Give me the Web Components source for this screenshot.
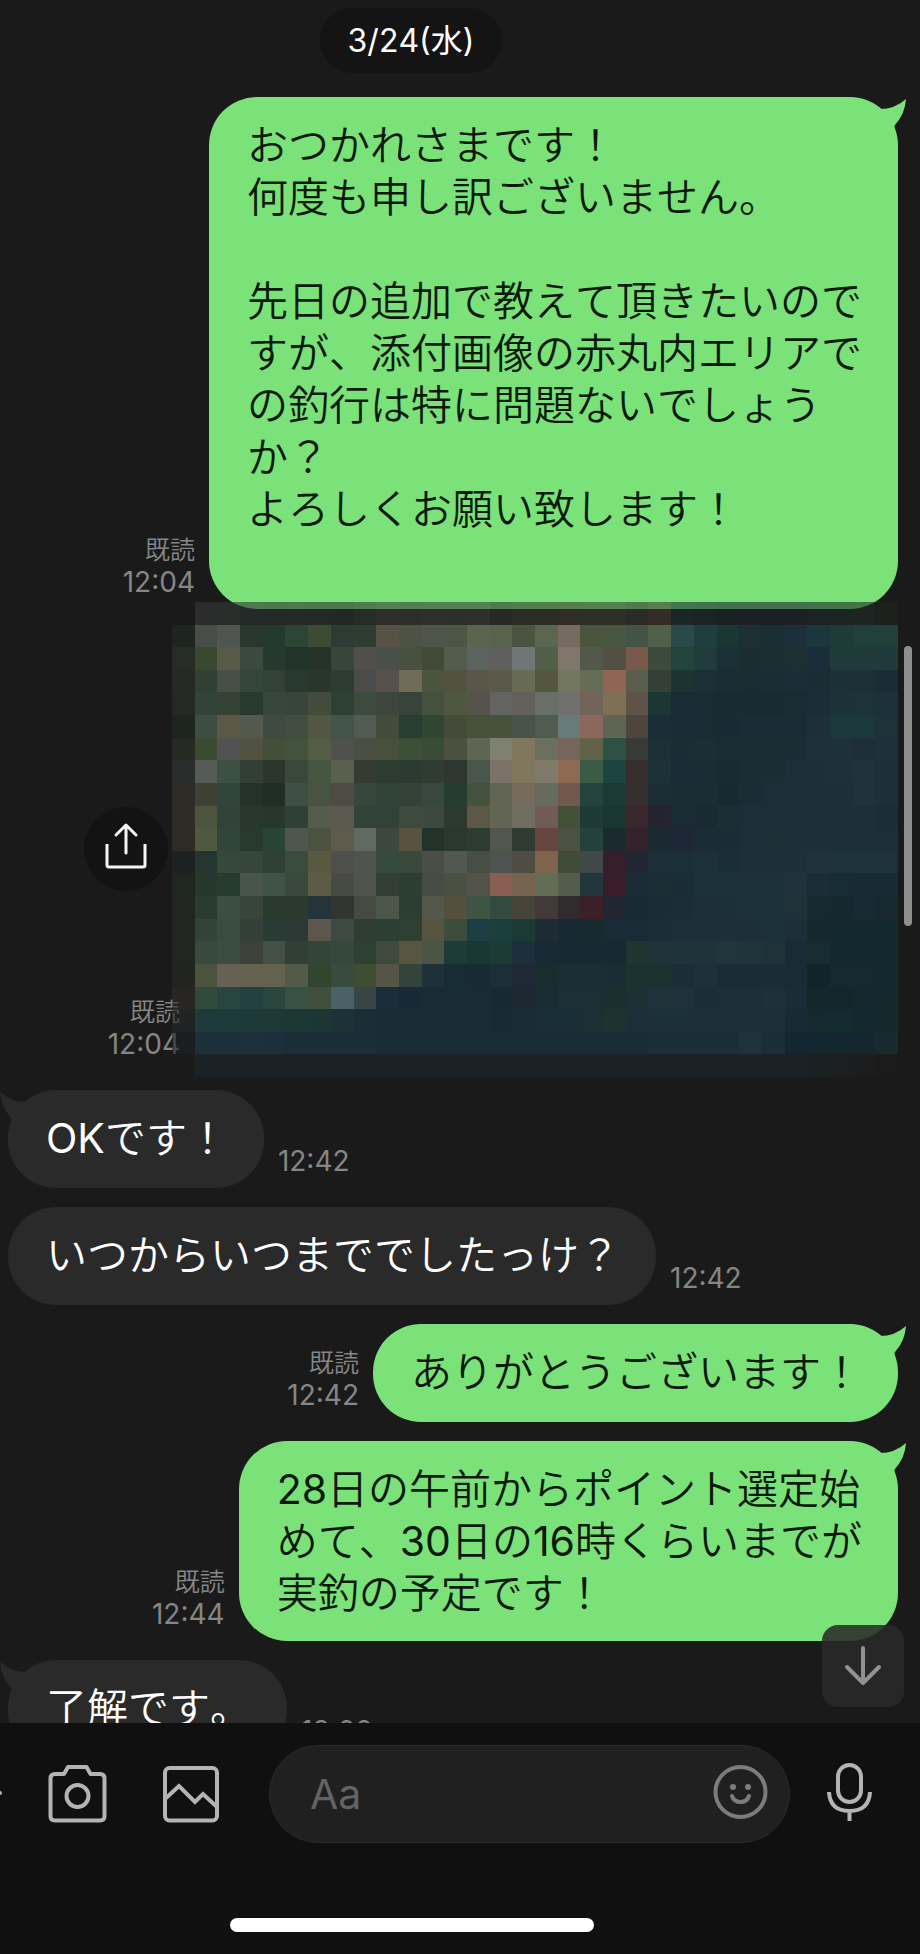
<!DOCTYPE html>
<html lang="ja">
<head>
<meta charset="utf-8">
<meta name="viewport" content="width=device-width, initial-scale=1">
<title>トーク</title>
<style>
    body {
        margin: 0;
        background: #1a1a1a;
        color: #fff;
        font-family: Inter, "Noto Sans CJK JP", sans-serif;
        font-kerning: none;
        text-spacing-trim: space-all;
    }

    /* Latin runs sit heavier than the kana around them */
    chat-message b {
        font-weight: 400;
    }
</style>
</head>
<body>
<chat-app>
    <chat-date>3/24(水)</chat-date>
    <chat-message side="out" tail time="12:04" read>おつかれさまです！<br>何度も申し訳ございません。<br><br>先日の追加で教えて頂きたいのですが、添付画像の赤丸内エリアでの釣行は特に問題ないでしょうか？<br>よろしくお願い致します！<br>&nbsp;</chat-message>
    <chat-photo time="12:04"></chat-photo>
    <chat-message side="in" tail time="12:42"><b>OK</b>です！</chat-message>
    <chat-message side="in" time="12:42">いつからいつまででしたっけ？</chat-message>
    <chat-message side="out" tail time="12:42" read>ありがとうございます！</chat-message>
    <chat-message side="out" tail time="12:44" read><b>28</b>日の午前からポイント選定始<br>めて、<b>30</b>日の<b>16</b>時くらいまでが<br>実釣の予定です！</chat-message>
    <chat-message side="in" tail time="13:02">了解です。</chat-message>
    <chat-composer slot="footer"></chat-composer>
</chat-app>

<script>
// Page frame: message list on top, composer below
class ChatApp extends HTMLElement {
    constructor() {
        super();
        this.attachShadow({ mode: 'open' });
        this.shadowRoot.innerHTML = `
            <style>
                :host {
                    display: flex;
                    flex-direction: column;
                    height: 100vh;
                    overflow: hidden;
                }

                main {
                    position: relative;
                    flex: 1;
                    min-height: 0;
                    overflow: hidden;
                }

                .list {
                    display: flex;
                    flex-direction: column;
                    gap: 19px;
                    padding: 8px 22px 0 8px;
                }

                .scrollbar {
                    position: absolute;
                    top: 646px;
                    right: 8px;
                    width: 8px;
                    height: 280px;
                    border-radius: 4px;
                    background: #8e8e8e;
                }

                .down {
                    position: absolute;
                    right: 16px;
                    bottom: 16px;
                    width: 82px;
                    height: 82px;
                    padding: 0;
                    border: 0;
                    border-radius: 16px;
                    background: rgba(41, 41, 41, .87);
                }

                svg {
                    display: block;
                }
            </style>
            <main>
                <div class="list"><slot></slot></div>
                <div class="scrollbar"></div>
                <button class="down" aria-label="最新のメッセージへ">
                    <svg width="82" height="82" viewBox="0 0 82 82" fill="none" stroke="#929292" stroke-width="4" stroke-linecap="round" stroke-linejoin="round">
                        <path d="M41 23V58M25 42L41 58L57 42"/>
                    </svg>
                </button>
            </main>
            <slot name="footer"></slot>
        `;
    }
}

// Date separator
class ChatDate extends HTMLElement {
    constructor() {
        super();
        this.attachShadow({ mode: 'open' });
        this.shadowRoot.innerHTML = `
            <style>
                :host {
                    display: flex;
                    justify-content: center;
                    padding-right: 84px;
                    margin-bottom: 5px;
                }

                span {
                    padding: 0 28px;
                    border-radius: 33px;
                    background: #141414;
                    font-size: 32px;
                    line-height: 65px;
                }
            </style>
            <span><slot></slot></span>
        `;
    }
}

// Read mark and time, shared by messages and photos
class ChatMeta extends HTMLElement {
    constructor() {
        super();
        this.attachShadow({ mode: 'open' });
    }

    connectedCallback() {
        const read = this.hasAttribute('read') ? '<div>既読</div>' : '';
        this.shadowRoot.innerHTML = `
            <style>
                :host {
                    display: block;
                    flex: none;
                    color: #868686;
                    font-size: 25px;
                    font-weight: 350;
                    line-height: 32px;
                    text-align: right;
                }

                time {
                    display: block;
                    font-size: 28px;
                    font-weight: 400;
                }
            </style>
            ${read}
            <time>${this.getAttribute('time')}</time>
        `;
    }
}

// Speech bubble, side="in" or side="out"
class ChatMessage extends HTMLElement {
    constructor() {
        super();
        this.attachShadow({ mode: 'open' });
    }

    connectedCallback() {
        const tail = this.hasAttribute('tail')
            ? '<svg width="30" height="42" viewBox="0 0 30 42"><path d="M4 12Q19 12 30 2Q29 17 19 28L14 41L4 24Z"/></svg>'
            : '';
        const read = this.hasAttribute('read') ? 'read' : '';

        this.shadowRoot.innerHTML = `
            <style>
                :host {
                    display: flex;
                    align-items: flex-end;
                    gap: 14px;
                }

                :host([side="out"]) {
                    flex-direction: row-reverse;
                }

                .bubble {
                    position: relative;
                    box-sizing: border-box;
                    max-width: 689px;
                    min-height: 98px;
                    padding: 22px 36px 22px 38px;
                    border-radius: 48px;
                    background: #2a2a2a;
                    font-size: 41px;
                    font-weight: 350;
                    line-height: 52px;
                }

                :host([side="out"]) .bubble {
                    background: #7be279;
                    color: #0b1a0b;
                }

                svg {
                    position: absolute;
                    top: 0;
                    left: -8px;
                    transform: scaleX(-1);
                    fill: #2a2a2a;
                }

                :host([side="out"]) svg {
                    left: auto;
                    right: -8px;
                    transform: none;
                    fill: #7be279;
                }

                chat-meta {
                    padding-bottom: 11px;
                }
            </style>
            <div class="bubble">${tail}<slot></slot></div>
            <chat-meta time="${this.getAttribute('time')}" ${read}></chat-meta>
        `;
    }
}

// Mosaic of the attached map, one row per line, 32 cells each
const MOSAIC = [
    '1a1a1a 373a38 363a35 2d3431 2c3430 293530 2c3430 29322e 303832 403c38 3c3b35 3d4038 3b3e37 3e3f39 32322f 383a2e 3b3a30 403a34 3c3d34 3f3c34 36352f 433b34 1c2e31 1c292d 1b2629 1b242c 1c252b 1a242a 1d2a2c 1e2c28 1f2c26 1e2622',
    '222c25 484d47 50564f 29382f 253a2e 2c4535 3c4c34 2c3c34 2d3e30 565245 4c5343 4e5549 4d5645 5a644e 58624d 495540 5b6650 766b61 4a5540 485742 445444 50604b 2a4a4a 1f3f3f 1b3735 1b2f34 1b2e34 1b303a 1b373e 1f3b39 1f403d 21403a',
    '323831 39482f 575a47 3b4a3e 26392e 21342a 253329 38453b 514e4b 49504a 48503e 434a38 535d4c 5c635f 605f60 6e7775 525f48 80766c 52594a 534f43 79594a 3d4a3a 23443b 1f3c3b 1b3034 1c2d31 1b2e32 1e2f32 1b2c3a 1f3b39 1f3a38 1e3a39',
    '303431 304033 454f45 34453a 324237 283a2f 27372b 2d3d31 4b4b4a 56514c 706c57 4a543e 525241 5a5649 5a5848 686b54 55563e 747760 666d55 906555 5a5d4c 343f35 1b3431 1c2e36 1b2c33 1b2c30 1a2c34 1b2e37 1b2c35 1c3137 1c2f36 1c2c36',
    '2e322f 32443a 344333 273a2d 37483b 37453a 424c3c 2e4031 3c4b3d 3c463a 38433b 44513c 505741 55534c 636362 625f5d 6a6e69 70716f 73645a 7e7055 5f5246 1c3634 192b34 192b33 1a2a33 192a33 192a33 1a2b34 1c2d37 1b3237 1c3338 1d313a',
    '222d23 3e4d41 5b5848 525a4e 3f4b40 414e40 515742 43544a 515b50 434c3a 2a3d31 304630 444b38 46513a 46523c 475447 515c51 697a7b 8c675e 5e6653 4e453c 1b2d37 1a2b35 1a2b34 192a34 1c2c36 1c2c36 1b2b35 1e2f39 1b383b 1b383b 1e323a',
    '2f332c 3b4b30 525350 51523f 42503a 43523b 545c45 4f514f 4b4e43 46503c 3b5036 3a4c35 4a513d 5f6553 7e8070 81775e 6b705e 75655a 62614a 2e5145 373a35 1d2f37 1b2c35 1c2d36 1a2b34 1b2c34 1b2c35 1b2c34 1e303a 1e303a 1e2e39 1f303a',
    '373938 555c55 3c5144 333f35 2b362d 394839 455641 5a604d 363b31 2c3d30 2c3b31 2e3c32 2d372f 485749 7c7368 81775f 807a6a 8d6b53 3b5b47 1c4542 352e2d 1d3236 1b2b35 1b2c34 192a32 1b2c34 1b2c34 1d2f39 1d2f39 1e303a 20323c 1d303a',
    '3e3931 3d4033 32453a 23332a 202f26 3e5046 485441 4e4b42 38473d 314237 324237 39483f 253d30 44533b 626554 756c5d 676b5d 72594d 24433f 1b3a37 35302d 1b2e36 1b2c34 1b2c34 182a31 1b2c34 1c2e37 1d2f39 1d2f39 1d2f39 20323c 1d303a',
    '3e3931 4d553f 324439 28382d 28362c 304038 555c4a 5b5a4e 32433a 314238 3e4a3e 3d493e 2d3a30 5d5846 626554 706e60 705c54 455039 1e3a35 1a3633 38272b 25242e 1b2b34 192a33 1b2d35 1c2e37 1c2e37 1d2f39 1d2f39 1d2f39 1d2f39 1c2d38',
    '3e3931 4f593f 32453a 28392e 294433 4d574e 4b5240 5f5b4c 606a60 3c483b 58523f 23332a 293a2d 2c3c30 51574d 303b31 67463f 4d5142 25413e 1a2a2f 35222c 1a2a30 1d2735 1b2c36 1b2c36 1c2e37 1d2f37 1d303a 1d303a 1d303a 1d303a 1d2e38',
    '212727 253630 364839 35473a 2d4033 3a4d3d 58593f 4f504b 4f554e 374b3c 39493b 4a4e47 515751 484e46 4c5450 4e4d43 80634c 404c37 404848 371e2b 222632 1c2e37 1a2f38 1d313a 1a2e38 1d303a 1d303a 1d303a 20333d 1e323c 1e323c 1e323b',
    '252e25 26372b 263a2e 485549 415346 39493b 5c5b46 484b43 4e544c 333e34 2c3e31 474d44 4a5143 54534a 895f54 766450 616e55 545d4c 21373d 391e29 192c35 1c2d36 1a2d36 1d313a 1d313a 1c313b 1d313b 20323c 1b2e38 182c36 182b34 182b34',
    '272f27 2b3b2e 3c4e3f 39443a 29392d 2a3a2e 23343b 313730 454b40 4c5648 2b3e31 54584a 54503e 3e5444 324b41 45453a 41393a 302b2d 3b2028 222632 182b35 1a2c35 1b2d37 1d303a 1c303a 1d313a 1d313b 1f3239 15292f 16282f 182b34 17282f',
    '272f27 32443a 394c3f 344037 2a3b36 2b3a36 5d564d 404941 2e3e30 2b3f32 2f4033 57543f 3d4d3d 1d3e44 1b3f3c 1c3a35 1d2b33 182834 18292f 192b37 192b36 1b2e38 1d303a 1d303a 1d303a 1d303a 1d313b 1c2f39 14282e 14292d 14292d 14292d',
    '272f27 394a3c 3b4d40 3d4238 454f45 304032 334538 36483c 2d4031 3f493c 585641 4a5643 1d3b38 1a3735 1b3b34 1d2f3b 182a36 172a34 172a34 172a34 20352f 1f3338 1f343a 1e343a 20363a 20353a 1e3238 192c35 182d32 14292e 14292e 14292e',
    '262c26 4b533e 666154 666250 65614f 545a49 33442f 394a3f 3f4d34 565446 33453b 1e313b 182c35 182b34 1c2f39 1f2935 192d2e 1b2e34 1b2e34 1b2d34 1c3230 1c3230 1b2d36 1e303a 1b2c36 1b2c36 1b2c36 192b34 12242a 15292e 15292e 14292e',
    '322e2b 304a3c 28463f 234141 28453e 395144 414f3d 4a6168 384545 1b2d3b 192836 192b35 192b35 192b35 172a34 1f2832 192c31 1b2f34 1b2f34 1b2f31 1d3134 1f3239 1f323c 1b2d37 1c2e37 1c2e37 1f303a 1a2c35 132629 13262a 14282d 15292d',
    '232b28 1e3a3a 1e3b3c 1d3a38 1d3835 1b3834 1b3634 1c3236 1b2e36 1a2c36 1a2c36 1a2c36 1a2c36 1a2c36 182b35 192c36 192e36 192e36 1c3033 1e332d 1c2f38 1c303a 1c303a 1c2e38 1c2e38 1d2f39 1d303a 182b35 152a2e 142b30 14292d 15292d',
    '1d2226 1c303b 1c303b 1d303c 1c2f3b 1b2e38 1b2e38 1b2e38 1b2d37 1a2c36 1a2c36 1a2c36 1a2c36 192c36 1a2d37 1a2d37 1a2d37 1a2d37 1a2d36 1a2d36 1a2c36 1b2d36 1b2d36 1b2d36 1b2d37 1f323c 1b2d37 14262f 14262f 14262f 14262f 18292f',
    '1a1a1a 1b2225 1b2225 1b2225 1b2225 1b2225 1b2225 1b2225 1b2225 1b2225 1b2225 1b2225 1b2225 1b2225 1b2225 1b2225 1b2226 1b2225 1b2225 1b2225 1b2225 1b2225 1b2225 1b2225 1b2225 1b2225 1b2226 1b2125 1b2022 1b1f22 1b1d1e 1b1b1b'
];

class ChatPhoto extends HTMLElement {
    constructor() {
        super();
        this.attachShadow({ mode: 'open' });
    }

    connectedCallback() {
        const cells = MOSAIC.map((row, y) => row.split(' ').map((color, x) => {
            if (color === '1a1a1a') return '';
            // the top row and left column let what lies under them shine through
            const opacity = x === 0 || y === 0 ? ' fill-opacity="0.6"' : '';
            return `<rect x="${x}" y="${y}" width="1" height="1" fill="#${color}"${opacity}/>`;
        }).join('')).join('');

        this.shadowRoot.innerHTML = `
            <style>
                :host {
                    display: flex;
                    justify-content: flex-end;
                    margin: -26px 0 -6px;
                }

                .side {
                    display: flex;
                    flex-direction: column;
                    justify-content: flex-end;
                    align-items: flex-end;
                    gap: 105px;
                    margin-right: -8px;
                    padding-bottom: 17px;
                }

                button {
                    width: 84px;
                    height: 84px;
                    margin-right: 12px;
                    padding: 0;
                    border: 0;
                    border-radius: 50%;
                    background: #131313;
                }

                svg {
                    display: block;
                }

                .map {
                    position: relative;
                    flex: none;
                    width: 726px;
                    height: 475px;
                }
            </style>
            <div class="side">
                <button aria-label="共有">
                    <svg width="84" height="84" viewBox="0 0 84 84" fill="none" stroke="#f5f5f5" stroke-width="3" stroke-linecap="round" stroke-linejoin="round">
                        <path d="M42 46V19M32 28L42 18L52 28"/>
                        <path d="M23 37V58Q23 60 25 60H59Q61 60 61 58V37" stroke-linecap="butt"/>
                    </svg>
                </button>
                <chat-meta time="${this.getAttribute('time')}" read></chat-meta>
            </div>
            <svg class="map" viewBox="0 0 32 21" preserveAspectRatio="none" shape-rendering="crispEdges" role="img" aria-label="地図">${cells}</svg>
        `;
    }
}

// Input bar with the tool buttons and the home indicator
class ChatComposer extends HTMLElement {
    constructor() {
        super();
        this.attachShadow({ mode: 'open' });
        this.shadowRoot.innerHTML = `
            <style>
                :host {
                    display: block;
                    flex: none;
                    overflow: hidden;
                    background: #101010;
                }

                .bar {
                    display: flex;
                    align-items: center;
                    padding: 22px 39px 75px 0;
                }

                .tools {
                    display: flex;
                    gap: 49px;
                    margin-right: 46px;
                    margin-left: -67px;
                }

                button {
                    flex: none;
                    width: 64px;
                    height: 64px;
                    padding: 0;
                    border: 0;
                    background: none;
                    color: #b4b4b4;
                }

                svg {
                    display: block;
                    overflow: visible;
                    fill: none;
                    stroke: currentColor;
                    stroke-width: 4;
                    stroke-linejoin: round;
                }

                .field {
                    display: flex;
                    flex: 1;
                    align-items: center;
                    box-sizing: border-box;
                    min-width: 0;
                    height: 98px;
                    margin-right: 27px;
                    padding: 0 16px 0 40px;
                    border: 1px solid #2b2b2b;
                    border-radius: 49px;
                    background: #202020;
                }

                input {
                    flex: 1;
                    min-width: 0;
                    padding: 0;
                    border: 0;
                    outline: 0;
                    background: none;
                    color: #fff;
                    font-family: inherit;
                    font-size: 41px;
                    line-height: 52px;
                }

                input::placeholder {
                    color: #636363;
                    opacity: 1;
                }

                .field button {
                    color: #7c7c7c;
                }

                .home {
                    display: flex;
                    justify-content: center;
                    padding: 0 96px 22px 0;
                }

                .home div {
                    width: 364px;
                    height: 14px;
                    border-radius: 7px;
                    background: #fff;
                }
            </style>
            <div class="bar">
                <div class="tools">
                    <button aria-label="追加">
                        <svg width="64" height="64" viewBox="0 0 64 64" stroke-linecap="round"><path d="M12 31H67M40 4V58"/></svg>
                    </button>
                    <button aria-label="カメラ">
                        <svg width="64" height="64" viewBox="0 0 64 64">
                            <path d="M9 12H18L22 5H40.500L44.500 12H54Q58.500 12 58.500 16.500V54Q58.500 58.500 54 58.500H9Q4.500 58.500 4.500 54V16.500Q4.500 12 9 12Z"/>
                            <circle cx="31.500" cy="34" r="11"/>
                        </svg>
                    </button>
                    <button aria-label="写真">
                        <svg width="64" height="64" viewBox="0 0 64 64">
                            <rect x="6" y="6" width="52" height="52.500" rx="4.500"/>
                            <path d="M6 37L20 24L36 40L44 32L58 45" stroke-linejoin="miter"/>
                        </svg>
                    </button>
                </div>
                <div class="field">
                    <input type="text" placeholder="Aa" aria-label="メッセージを入力">
                    <button aria-label="スタンプ">
                        <svg width="64" height="64" viewBox="0 0 64 64">
                            <circle cx="31.500" cy="30" r="25"/>
                            <path d="M23 34Q25 40 31.500 40Q38 40 40 34" stroke-linecap="round"/>
                            <circle cx="24" cy="25" r="3" fill="currentColor" stroke="none"/>
                            <circle cx="39" cy="25" r="3" fill="currentColor" stroke="none"/>
                        </svg>
                    </button>
                </div>
                <button aria-label="音声メッセージ">
                    <svg width="64" height="64" viewBox="0 0 64 64">
                        <rect x="21" y="3" width="23" height="37" rx="11.500"/>
                        <path d="M12 30Q13 49 32.500 49Q52 49 53 30M32.500 49V59"/>
                    </svg>
                </button>
            </div>
            <div class="home"><div></div></div>
        `;
    }
}

customElements.define('chat-app', ChatApp);
customElements.define('chat-date', ChatDate);
customElements.define('chat-meta', ChatMeta);
customElements.define('chat-message', ChatMessage);
customElements.define('chat-photo', ChatPhoto);
customElements.define('chat-composer', ChatComposer);
</script>
</body>
</html>
